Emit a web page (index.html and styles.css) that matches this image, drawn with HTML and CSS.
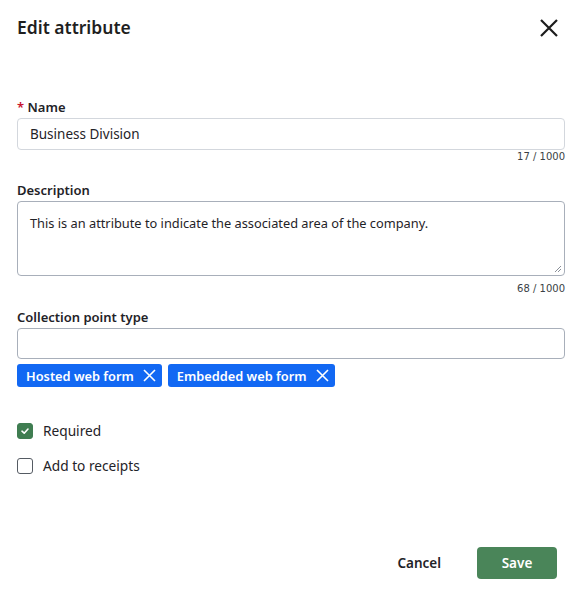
FILE: index.html
```html
<!DOCTYPE html>
<html lang="en">
<head>
<meta charset="utf-8">
<title>Edit attribute</title>
<link rel="stylesheet" href="styles.css">
</head>
<body>
<div class="dialog">
  <header class="dialog-header">
    <h1 class="dialog-title">Edit attribute</h1>
    <button class="close-btn" aria-label="Close">
      <svg width="20" height="20" viewBox="0 0 20 20"><path d="M2 2 L18 18 M18 2 L2 18" stroke="#1c1c1c" stroke-width="2.2" fill="none"/></svg>
    </button>
  </header>

  <div class="field field-name">
    <label class="field-label"><span class="req">*</span> Name</label>
    <div class="text-input">Business Division</div>
    <div class="counter">17 / 1000</div>
  </div>

  <div class="field field-desc">
    <label class="field-label">Description</label>
    <div class="text-area">This is an attribute to indicate the associated area of the company.
      <svg class="grip" width="8" height="8" viewBox="0 0 8 8"><path d="M7 1 L1 7 M7 4 L4 7" stroke="#8a8f98" stroke-width="1" fill="none"/></svg>
    </div>
    <div class="counter counter-desc">68 / 1000</div>
  </div>

  <div class="field field-type">
    <label class="field-label">Collection point type</label>
    <div class="text-input empty"></div>
    <div class="tags">
      <span class="tag">Hosted web form
        <svg width="13" height="13" viewBox="0 0 13 13"><path d="M1 1 L12 12 M12 1 L1 12" stroke="#fff" stroke-width="1.6" fill="none"/></svg>
      </span>
      <span class="tag">Embedded web form
        <svg width="13" height="13" viewBox="0 0 13 13"><path d="M1 1 L12 12 M12 1 L1 12" stroke="#fff" stroke-width="1.6" fill="none"/></svg>
      </span>
    </div>
  </div>

  <div class="checks">
    <label class="check">
      <span class="box checked">
        <svg width="10" height="10" viewBox="0 0 10 10"><path d="M2 5.2 L4.2 7.2 L8 3" stroke="#fff" stroke-width="1.6" fill="none" stroke-linecap="round" stroke-linejoin="round"/></svg>
      </span>
      Required
    </label>
    <label class="check">
      <span class="box"></span>
      Add to receipts
    </label>
  </div>

  <footer class="actions">
    <button class="btn btn-cancel">Cancel</button>
    <button class="btn btn-save">Save</button>
  </footer>
</div>
</body>
</html>
```

FILE: styles.css
```css
* {
  box-sizing: border-box;
}

html, body {
  margin: 0;
  padding: 0;
  background: #ffffff;
}

body {
  font-family: "Noto Sans", "Open Sans", sans-serif;
  color: #1f2328;
}

.dialog {
  width: 582px;
  height: 597px;
  padding: 0 17px;
  display: flex;
  flex-direction: column;
}

.dialog-header {
  display: flex;
  justify-content: space-between;
  align-items: flex-start;
  padding-top: 14px;
  height: 98px;
}

.dialog-title {
  margin: 0;
  font-size: 17.5px;
  line-height: 26px;
  font-weight: 600;
  color: #1f1f1f;
}

.close-btn {
  border: 0;
  background: none;
  padding: 0;
  margin-top: 4px;
  margin-right: 6px;
  width: 20px;
  height: 20px;
  display: flex;
}

.field {
  display: flex;
  flex-direction: column;
}

.field-label {
  font-size: 13px;
  line-height: 18px;
  font-weight: 600;
  color: #1f2328;
  margin-bottom: 2px;
}

.req {
  color: #c8102e;
}

.text-input {
  height: 32px;
  border: 1px solid #d3d7dd;
  border-radius: 4px;
  padding: 0 12px;
  font-size: 13.5px;
  line-height: 30px;
  color: #1f2328;
}

.text-input.empty {
  height: 31px;
  border-color: #a8afba;
}

.counter {
  align-self: flex-end;
  font-family: "DejaVu Sans", sans-serif;
  font-size: 10px;
  line-height: 14px;
  color: #3a3f45;
  margin-top: 0;
}

.field-desc {
  margin-top: 17px;
}

.text-area {
  position: relative;
  height: 75px;
  border: 1px solid #a8afba;
  border-radius: 4px;
  padding: 12px 12px;
  font-size: 12.8px;
  line-height: 18px;
  color: #1f2328;
}

.grip {
  position: absolute;
  right: 2px;
  bottom: 2px;
}

.counter-desc {
  margin-top: 6px;
}

.field-type {
  margin-top: 12px;
}

.tags {
  display: flex;
  gap: 6px;
  margin-top: 5px;
}

.tag {
  display: inline-flex;
  align-items: center;
  gap: 9px;
  height: 23px;
  padding: 0 6px 0 9px;
  background: #1268f3;
  color: #ffffff;
  border-radius: 3px;
  font-size: 12.8px;
  font-weight: 600;
}

.checks {
  display: flex;
  flex-direction: column;
  gap: 19px;
  margin-top: 36px;
}

.check {
  display: flex;
  align-items: center;
  gap: 10px;
  font-size: 13.7px;
  line-height: 16px;
  color: #1f2328;
}

.box {
  width: 16px;
  height: 16px;
  border: 1px solid #555b63;
  border-radius: 3px;
  display: flex;
  align-items: center;
  justify-content: center;
}

.box.checked {
  background: #3f7d51;
  border-color: #3f7d51;
}

.actions {
  margin-top: auto;
  margin-bottom: 18px;
  display: flex;
  justify-content: flex-end;
  align-items: center;
  gap: 36px;
  padding-right: 8px;
}

.btn {
  font-family: "Noto Sans", "Open Sans", sans-serif;
  font-size: 13.5px;
  font-weight: 600;
  border: 0;
  background: none;
  padding: 0;
}

.btn-cancel {
  color: #1f2328;
}

.btn-save {
  width: 80px;
  height: 32px;
  border-radius: 4px;
  background: #4a8559;
  color: #ffffff;
}
```
